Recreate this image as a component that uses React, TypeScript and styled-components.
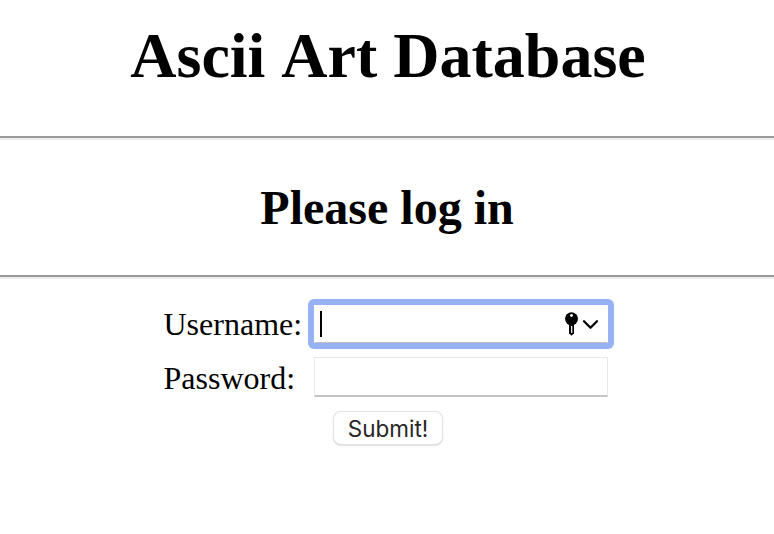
import React from "react";
import styled, { createGlobalStyle } from "styled-components";

const GlobalStyle = createGlobalStyle`
  * { box-sizing: border-box; }
  body { margin: 0; background: #fff; color: #000; font-family: "Liberation Serif", "Times New Roman", serif; overflow: hidden; }
`;
const Page = styled.main`
  height: 534px;
  display: flex;
  flex-direction: column;
`;
const Title = styled.h1`
  margin: 0;
  height: 136px;
  padding: 19px 0 0 2px;
  font-size: 64px;
  line-height: 74px;
  text-align: center;
  font-kerning: none;
`;
const Subtitle = styled.h2`
  margin: 0;
  height: 135px;
  padding-top: 40px;
  font-size: 48px;
  line-height: 56px;
  text-align: center;
`;
const Rule = styled.hr`
  margin: 0;
  width: 100%;
  height: 4px;
  border: 0;
  border-top: 2px solid #9a9a9a;
  border-bottom: 2px solid #eeeeee;
`;
const Form = styled.form`
  display: flex;
  flex-direction: column;
  padding-left: 163px;
`;
const Row = styled.div<{ $top: number }>`
  display: flex;
  align-items: center;
  height: 40px;
  margin-top: ${(p) => p.$top}px;
`;
const Label = styled.label<{ $shift?: number }>`
  width: 151px;
  padding: ${(p) => p.$shift ?? 0}px 0 0 0.5px;
  font-size: 32px;
  line-height: 40px;
`;
const FocusRing = styled.div`
  margin: 0 -6px;
  padding: 6px;
  border-radius: 6px;
  background: #96b2f5;
`;
const Field = styled.div<{ $focused?: boolean }>`
  display: flex;
  align-items: center;
  width: 294px;
  height: ${(p) => (p.$focused ? 38 : 40)}px;
  padding: 0 8px 0 5px;
  background: #fff;
  border: 1px solid #e9e9e9;
  border-bottom: 2px solid #c4c4c4;
  ${(p) =>
    p.$focused &&
    `border-color: #fff #fff #bcbec4;
     border-bottom-width: 1px;`}
`;
const Caret = styled.span`
  width: 2px;
  height: 26px;
  margin-right: auto;
  background: #000;
`;
const Submit = styled.button`
  width: 108px;
  height: 32px;
  margin: 15px 0 0 171px;
  padding: 1px 0 0;
  border: 0;
  border-radius: 7px;
  background: #fff;
  box-shadow: 0 0 0 1px #e2e2e2, 0 1px 2px #999;
  color: #262626;
  font: 22.5px Inter, sans-serif;
`;

export default function App() {
  return (
    <Page>
      <GlobalStyle />
      <Title>Ascii Art Database</Title>
      <Rule />
      <Subtitle>Please log in</Subtitle>
      <Rule />
      <Form>
        <Row $top={25}>
          <Label>Username:</Label>
          <FocusRing>
            <Field $focused>
              <Caret />
              <svg width="36" height="26" viewBox="0 0 36 26" fill="none">
                <circle cx="8.5" cy="7.8" r="6.5" fill="#000" />
                <path d="M6 12h5v10.2l-2.5 2.6L6 22.2Z" fill="#000" />
                <path d="M8.7 15v7" stroke="#fff" strokeWidth="1.2" />
                <circle cx="8.5" cy="4.5" r="1.4" fill="#fff" />
                <path d="m21 10.3 6.5 6.5 6.5-6.5" stroke="#000" strokeWidth="2.3" strokeLinecap="round" strokeLinejoin="round" />
              </svg>
            </Field>
          </FocusRing>
        </Row>
        <Row $top={13}>
          <Label $shift={2}>Password:</Label>
          <Field />
        </Row>
        <Submit type="button">Submit!</Submit>
      </Form>
    </Page>
  );
}
